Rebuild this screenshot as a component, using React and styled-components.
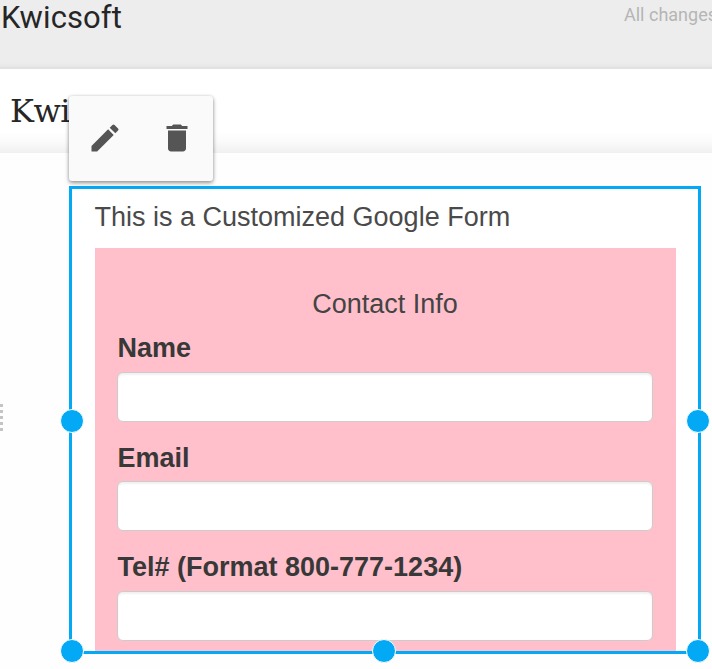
import React from 'react'
import styled, { createGlobalStyle } from 'styled-components'
import { MdEdit, MdDelete } from 'react-icons/md'


const GlobalStyle = createGlobalStyle`
  * {
    box-sizing: border-box;
  }

  body {
    margin: 0;
    overflow: hidden;
    background: #fff;
  }
`;

const Page = styled.div`
  position: relative;
  display: flex;
  flex-direction: column;
  width: 712px;
  height: 669px;
  overflow: hidden;
  background: #fefefe;
`;

const TopBar = styled.header`
  display: flex;
  justify-content: space-between;
  height: 69px;
  padding-left: 1px;
  background: linear-gradient(#ededed 62px, #e9e9e9 66px, #dfdfdf 68px, #e6e6e6 69px);
  font-family: Roboto, sans-serif;
  white-space: nowrap;
`;

const SiteName = styled.div`
  font-size: 31px;
  line-height: 36px;
  letter-spacing: 0.1px;
  color: #262626;
`;

const SaveStatus = styled.div`
  width: 88px;
  font-size: 18px;
  line-height: 29px;
  color: #b5b5b5;
`;

const TitleBar = styled.div`
  height: 84px;
  padding: 20px 0 0 10px;
  background: linear-gradient(#fff 62px, #fbfbfb 72px, #f0f0f0 84px);
  font-family: "DejaVu Serif", serif;
  font-size: 32px;
  line-height: 44px;
  letter-spacing: -0.5px;
  color: #262626;
`;

const Canvas = styled.main`
  display: flex;
  flex: 1;
  padding-top: 33px;
`;

const Gutter = styled.div`
  width: 69px;
  padding-top: 218px;
`;

const DragGrip = styled.div`
  width: 3px;
  height: 27px;
  background: repeating-linear-gradient(#c4c4c4 0 3px, transparent 3px 6px);
`;

const Selection = styled.section`
  position: relative;
  width: 632px;
  height: 468px;
  padding: 0 22.5px;
  border: 3px solid #03a9f4;
  background: #fff;
  font-family: "Liberation Sans", Arial, sans-serif;
`;

const Handle = styled.span`
  position: absolute;
  left: ${(props) => props.x}px;
  top: ${(props) => props.y}px;
  width: 24px;
  height: 24px;
  border: 1.5px solid #fff;
  border-radius: 50%;
  background: #03a9f4;
  transform: translate(-50%, -50%);
`;

const Intro = styled.p`
  height: 59px;
  margin: 0;
  padding-top: 12px;
  font-size: 27px;
  line-height: 32px;
  color: #4a4a4a;
  white-space: nowrap;
`;

const FormPanel = styled.form`
  width: 581px;
  height: 403px;
  padding: 40px 22.5px 0;
  background: #ffc0cb;
`;

const FormTitle = styled.div`
  height: 45px;
  font-size: 27px;
  line-height: 32px;
  text-align: center;
  color: #444;
`;

const Field = styled.label`
  display: block;
  height: 109.7px;
`;

const FieldLabel = styled.span`
  display: block;
  height: 38.6px;
  padding-left: 0.5px;
  font-size: 27px;
  font-weight: bold;
  line-height: 31px;
  color: #383838;
`;

const Input = styled.input`
  display: block;
  width: 100%;
  height: 50px;
  padding: 0 12px;
  border: 1px solid #ccc;
  border-radius: 6px;
  outline: none;
  background: #fff;
  box-shadow: inset 0 2px 2px rgba(0, 0, 0, 0.06);
  font-size: 24px;
`;

const Toolbox = styled.div`
  position: absolute;
  left: 69px;
  top: 96px;
  display: flex;
  width: 144px;
  height: 84.5px;
  padding: 24px 18px 0;
  justify-content: space-between;
  border-radius: 3px;
  background: #fafafa;
  box-shadow: 0 2px 4px rgba(0, 0, 0, 0.4), 0 0 3px rgba(0, 0, 0, 0.12);
`;

const ToolButton = styled.button`
  width: 36px;
  height: 36px;
  padding: 0;
  border: 0;
  background: none;
  color: #555;

  svg {
    display: block;
  }
`;

const fields = ['Name', 'Email', 'Tel# (Format 800-777-1234)'];

const handles = [
  [-0.2, 231.6],
  [626, 231.6],
  [-0.2, 461.6],
  [312.2, 461.6],
  [626, 461.6],
];

export default function App() {
  return (
    <React.Fragment>
      <GlobalStyle />
      <Page>
        <TopBar>
          <SiteName>Kwicsoft</SiteName>
          <SaveStatus>All changes</SaveStatus>
        </TopBar>
        <TitleBar>Kwi</TitleBar>

        <Canvas>
          <Gutter><DragGrip /></Gutter>
          <Selection>
            <Intro>This is a Customized Google Form</Intro>
            <FormPanel>
              <FormTitle>Contact Info</FormTitle>
              {fields.map((field) => (
                <Field key={field}>
                  <FieldLabel>{field}</FieldLabel>
                  <Input type="text" />
                </Field>
              ))}
            </FormPanel>
            {handles.map(([x, y]) => (
              <Handle key={`${x}-${y}`} x={x} y={y} />
            ))}
          </Selection>
        </Canvas>

        {/* Floating tools of the selected block */}
        <Toolbox>
          <ToolButton type="button" aria-label="Edit"><MdEdit size={36} /></ToolButton>
          <ToolButton type="button" aria-label="Delete"><MdDelete size={36} /></ToolButton>
        </Toolbox>
      </Page>
    </React.Fragment>
  );
}
